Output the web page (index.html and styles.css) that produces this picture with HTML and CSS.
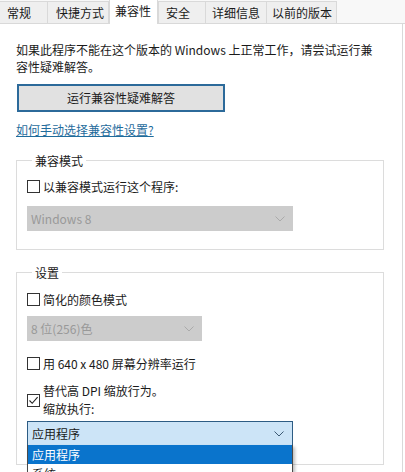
FILE: index.html
```html
<!DOCTYPE html>
<html lang="zh-CN">
<head>
<meta charset="utf-8">
<title>兼容性</title>
<link rel="stylesheet" href="styles.css">
</head>
<body>
<div class="tabs">
  <div class="tab t1">常规</div>
  <div class="tab t2">快捷方式</div>
  <div class="tab t3 active">兼容性</div>
  <div class="tab t4">安全</div>
  <div class="tab t5">详细信息</div>
  <div class="tab t6">以前的版本</div>
</div>
<div class="panel">
  <p class="intro">如果此程序不能在这个版本的 Windows 上正常工作，请尝试运行兼<br>容性疑难解答。</p>
  <div class="btn">运行兼容性疑难解答</div>
  <a class="link" href="#">如何手动选择兼容性设置?</a>

  <fieldset class="group g1">
    <legend>兼容模式</legend>
    <div class="check"><span class="box"></span><span>以兼容模式运行这个程序:</span></div>
    <div class="select disabled wide"><span>Windows 8</span>
      <svg class="chev" width="10" height="6" viewBox="0 0 10 6"><path d="M0.5 0.5 L5 5 L9.5 0.5" fill="none" stroke="currentColor" stroke-width="1"/></svg>
    </div>
  </fieldset>

  <fieldset class="group g2">
    <legend>设置</legend>
    <div class="check"><span class="box"></span><span>简化的颜色模式</span></div>
    <div class="select disabled narrow"><span>8 位(256)色</span>
      <svg class="chev" width="10" height="6" viewBox="0 0 10 6"><path d="M0.5 0.5 L5 5 L9.5 0.5" fill="none" stroke="currentColor" stroke-width="1"/></svg>
    </div>
    <div class="check c640"><span class="box"></span><span>用 640 x 480 屏幕分辨率运行</span></div>
    <div class="check cdpi"><span class="box checked"><svg width="11" height="11" viewBox="0 0 11 11"><path d="M1.5 5.5 L4.2 8.3 L9.6 2.2" fill="none" stroke="#222" stroke-width="1.1"/></svg></span>
      <span class="lines">替代高 DPI 缩放行为。<br>缩放执行:</span></div>
    <div class="dropwrap">
      <div class="select focused wide"><span>应用程序</span>
        <svg class="chev" width="10" height="6" viewBox="0 0 10 6"><path d="M0.5 0.5 L5 5 L9.5 0.5" fill="none" stroke="currentColor" stroke-width="1"/></svg>
      </div>
      <div class="droplist">
        <div class="opt sel">应用程序</div>
        <div class="opt">系统</div>
      </div>
    </div>
  </fieldset>
</div>
</body>
</html>
```
FILE: styles.css
```css
html, body {
  margin: 0;
  padding: 0;
}
body {
  width: 405px;
  height: 472px;
  overflow: hidden;
  background: #ffffff;
  font-family: "Noto Sans CJK SC", "Microsoft YaHei", sans-serif;
  font-size: 12px;
  color: #1a1a1a;
}
.tabs {
  display: flex;
  align-items: flex-end;
  height: 24px;
  background: #f8f8f8;
  border-bottom: 1px solid #d9d9d9;
  box-sizing: border-box;
  position: relative;
}
.tab {
  box-sizing: border-box;
  height: 22px;
  line-height: 22px;
  background: #efefef;
  border: 1px solid #d9d9d9;
  border-bottom: none;
  padding-left: 6px;
  margin-bottom: 0;
}
.t1 { width: 48px; padding-left: 7px; border-left: none; }
.t2 { width: 61px; padding-left: 8px; border-left: none; }
.t3 { width: 49px; }
.t4 { width: 48px; padding-left: 7px; }
.t5 { width: 61px; padding-left: 6px; border-left: none; }
.t6 { width: 70px; padding-left: 5px; border-left: none; }
.tab.active {
  height: 25px;
  line-height: 22px;
  background: #ffffff;
  margin-bottom: -1px;
  padding-left: 5px;
  border-color: #d9d9d9;
  position: relative;
  z-index: 1;
}
.panel {
  width: 403px;
  height: 448px;
  box-sizing: border-box;
  border-right: 1px solid #d9d9d9;
  padding: 17px 0 0 16px;
  background: #ffffff;
}
.intro {
  margin: 0;
  line-height: 17px;
}
.btn {
  box-sizing: border-box;
  width: 208px;
  height: 28px;
  margin: 9px 0 0 1px;
  border: 2px solid #2c6a9a;
  background: #e1e1e1;
  text-align: center;
  line-height: 24px;
}
.link {
  display: inline-block;
  margin-top: 9px;
  line-height: 17px;
  color: #1f6c9c;
  text-decoration: underline;
}
.group {
  box-sizing: border-box;
  width: 368px;
  margin: 14px 0 0 0;
  border: 1px solid #dcdcdc;
  padding: 0 0 18px 10px;
  min-width: 0;
}
.group legend {
  margin-left: 5px;
  padding: 0 3px;
  line-height: 17px;
}
.check {
  display: flex;
  align-items: center;
  gap: 3px;
  line-height: 17px;
  margin-top: 9px;
}
.box {
  box-sizing: border-box;
  width: 13px;
  height: 13px;
  border: 1px solid #333333;
  background: #ffffff;
  flex: none;
  display: flex;
  align-items: center;
  justify-content: center;
}
.select {
  box-sizing: border-box;
  height: 25px;
  display: flex;
  align-items: center;
  justify-content: space-between;
  padding: 0 8px 0 4px;
}
.wide { width: 266px; }
.narrow { width: 175px; }
.select.disabled {
  background: #cccccc;
  color: #999999;
}
.select.disabled .chev { color: #aaaaaa; }
.g1 .select { margin-top: 11px; }
.g2 .check:first-of-type { margin-top: 10px; }
.g2 .narrow { margin-top: 8px; }
.c640 { margin-top: 14px; }
.cdpi {
  margin-top: 10px;
  align-items: center;
}
.cdpi .lines {
  line-height: 18px;
}
.dropwrap {
  position: relative;
  margin-top: 3px;
}
.select.focused {
  background: #cce4f7;
  border: 1px solid #2d5c84;
  color: #1a1a1a;
}
.select.focused .chev { color: #3c5a74; }
.droplist {
  position: absolute;
  left: 0;
  top: 24px;
  width: 266px;
  box-sizing: border-box;
  border: 1px solid #4a4a4a;
  border-top: none;
  background: #ffffff;
  box-shadow: 2px 2px 3px rgba(0,0,0,0.25);
}
.opt {
  height: 19px;
  line-height: 19px;
  padding-left: 4px;
}
.opt.sel {
  background: #0a74cc;
  color: #ffffff;
}
```
